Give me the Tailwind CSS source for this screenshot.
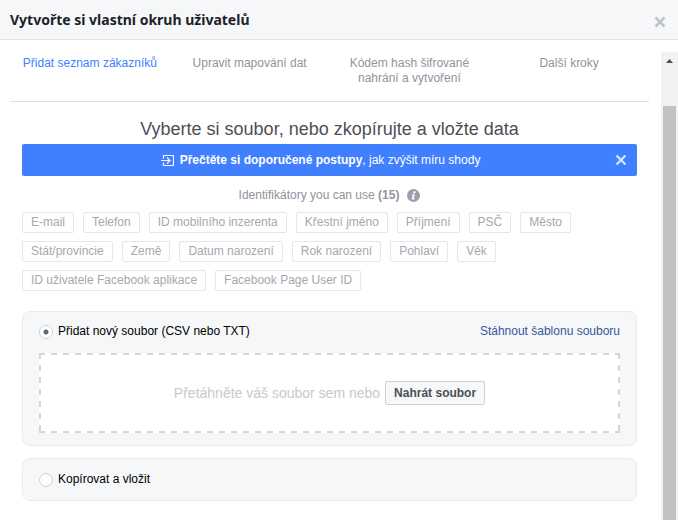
<!DOCTYPE html>
<html lang="cs">

<head>
  <title>Vytvořte si vlastní okruh uživatelů</title>
  <meta charset="UTF-8">
  <meta name="viewport" content="width=device-width, initial-scale=1.0">
  <script src="https://cdn.jsdelivr.net/npm/@tailwindcss/browser@4"></script>
</head>

<body class="flex h-screen flex-col overflow-hidden bg-white font-['Liberation_Sans',Arial,sans-serif] text-[12px] leading-[15px] text-[#90949c]">
  <header class="flex h-10 shrink-0 items-center justify-between border-b border-[#e5e5e5] bg-[#f6f7f9] pr-3 pl-2.5">
    <h1 class="font-['Noto_Sans',sans-serif] text-[14px] leading-[18px] font-bold text-[#1d2129]">Vytvořte si vlastní okruh uživatelů</h1>
    <button type="button" aria-label="Zavřít" class="pt-1">
      <svg class="size-3" viewBox="0 0 12 12" fill="none" stroke="#bec3c9" stroke-width="2.6"><path d="M1.5 1.5l9 9M10.5 1.5l-9 9" /></svg>
    </button>
  </header>

  <div class="flex min-h-0 flex-1 pt-3">
    <main class="min-w-0 flex-1 pr-3 pl-2.5">
      <ol class="grid h-[50px] grid-cols-4 border-b border-[#dddfe2] pt-1 text-center">
        <li class="px-2 text-[#4080ff]" aria-current="step">Přidat seznam zákazníků</li>
        <li class="px-2">Upravit mapování dat</li>
        <li class="px-4">Kódem hash šifrované nahrání a vytvoření</li>
        <li class="px-2">Další kroky</li>
      </ol>

      <div class="px-3 pt-4">
        <h2 class="text-center text-[18px] leading-[22px] text-[#4b4f56]">Vyberte si soubor, nebo zkopírujte a vložte data</h2>

        <!-- banner -->
        <div class="mt-1 flex h-8 items-center rounded-xs bg-[#4080ff] pr-2.5 pl-1 text-white">
          <p class="flex flex-1 items-center justify-center">
            <svg class="mr-1.5 h-[11px] w-[13px]" viewBox="0 0 13 11" fill="none" stroke="#f0f5ff" stroke-width="1.2"><path d="M2.5 3.5v-3h10v10h-10v-3M0 5.5h9M6 2.5l3 3-3 3" /></svg>
            <span><b>Přečtěte si doporučené postupy</b>, jak zvýšit míru shody</span>
          </p>
          <button type="button" aria-label="Zavřít oznámení">
            <svg class="size-3" viewBox="0 0 12 12" fill="none" stroke="#d9e6ff" stroke-width="2.2"><path d="M1.5 1.5l9 9M10.5 1.5l-9 9" /></svg>
          </button>
        </div>

        <p class="mt-3 flex items-center justify-center">
          <span>Identifikátory you can use <b>(15)</b></span>
          <svg class="ml-2 size-[13px]" viewBox="0 0 13 13"><circle cx="6.5" cy="6.5" r="6.5" fill="#9a9fab" /><circle cx="7.4" cy="3.2" r="1.2" fill="#fff" /><path d="M5 5.3h2.8l-1 4.2h1v1H4.6l1.1-4.2H4.8z" fill="#fff" /></svg>
        </p>

        <!-- identifiers -->
        <ul class="mt-[9px] flex flex-wrap gap-x-[9px] gap-y-2 text-[#a5a8af] *:h-[21px] *:rounded-xs *:border *:border-[#e5e6e9] *:px-2 *:py-0.5">
          <li>E-mail</li>
          <li>Telefon</li>
          <li>ID mobilního inzerenta</li>
          <li>Křestní jméno</li>
          <li>Příjmení</li>
          <li>PSČ</li>
          <li>Město</li>
          <li>Stát/provincie</li>
          <li>Země</li>
          <li>Datum narození</li>
          <li>Rok narození</li>
          <li>Pohlaví</li>
          <li>Věk</li>
          <li>ID uživatele Facebook aplikace</li>
          <li>Facebook Page User ID</li>
        </ul>

        <section class="mt-5 rounded-lg border border-[#e9ebee] bg-[#f6f7f9] px-4 pt-3 pb-3">
          <div class="flex items-center justify-between">
            <label class="flex items-center gap-[5px] text-black">
              <input type="radio" name="source" checked class="size-3.5 appearance-none rounded-full border border-[#ccd0d5] bg-white checked:bg-[radial-gradient(circle,#606770_2px,transparent_3px)]">
              Přidat nový soubor (CSV nebo TXT)
            </label>
            <a href="#" class="text-[#365899]">Stáhnout šablonu souboru</a>
          </div>
          <div class="relative mt-3.5 flex h-20 items-center justify-center gap-[5px] bg-white">
            <svg class="absolute inset-0 size-full" stroke="#d3d6db" stroke-width="4" stroke-dasharray="6 6">
              <line x1="0" y1="0" x2="100%" y2="0" />
              <line x1="0" y1="100%" x2="100%" y2="100%" />
              <line x1="0" y1="0" x2="0" y2="100%" />
              <line x1="100%" y1="0" x2="100%" y2="100%" />
            </svg>
            <span class="text-[14px] leading-[18px] text-[#c8c9cc]">Přetáhněte váš soubor sem nebo</span>
            <button type="button" class="relative h-6 rounded-xs border border-[#ced0d4] bg-[#f6f7f9] px-2 font-bold text-[#4b4f56]">Nahrát soubor</button>
          </div>
        </section>

        <section class="mt-3 rounded-lg border border-[#e9ebee] bg-[#f6f7f9] px-4 py-[13px]">
          <label class="flex items-center gap-[5px] text-black">
            <input type="radio" name="source" class="size-3.5 appearance-none rounded-full border border-[#ccd0d5] bg-white checked:bg-[radial-gradient(circle,#606770_2px,transparent_3px)]">
            Kopírovat a vložit
          </label>
        </section>
      </div>
    </main>

    <!-- scrollbar -->
    <div class="flex w-[17px] flex-col items-center bg-[#f1f1f1]" aria-hidden="true">
      <svg class="mt-[7px] h-1 w-[7px]" viewBox="0 0 7 4"><path d="M0 4l3.5-4L7 4z" fill="#505050" /></svg>
      <div class="mt-[43px] w-[13px] flex-1 bg-[#c1c1c1]"></div>
    </div>
  </div>
</body>

</html>
